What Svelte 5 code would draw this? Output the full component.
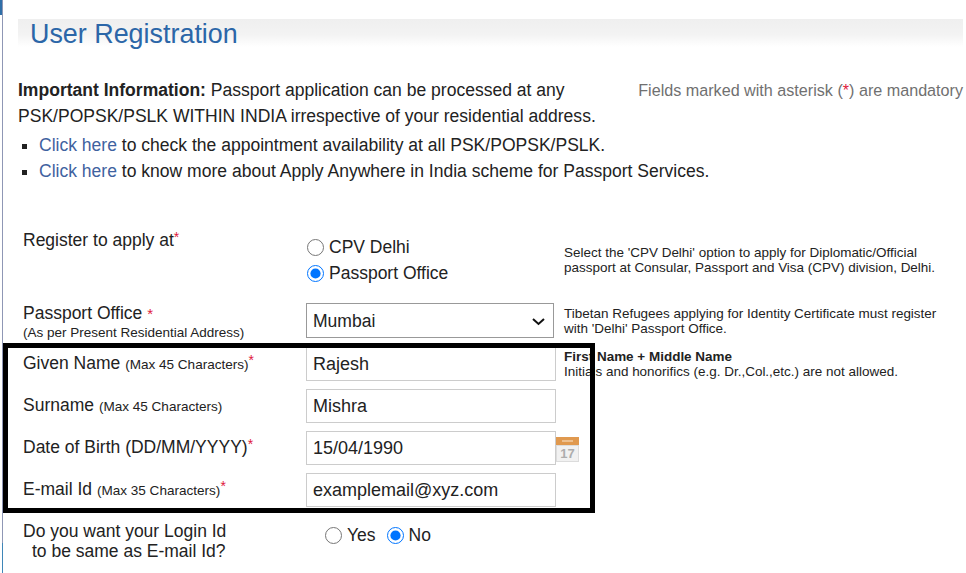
<script>
  const fields = [
    { label: 'Given Name', hint: '(Max 45 Characters)', req: true, value: 'Rajesh' },
    { label: 'Surname', hint: '(Max 45 Characters)', req: false, value: 'Mishra' },
    { label: 'Date of Birth (DD/MM/YYYY)', hint: '', req: true, value: '15/04/1990', cal: true },
    { label: 'E-mail Id', hint: '(Max 35 Characters)', req: true, value: 'examplemail@xyz.com' }
  ];
</script>

<div class="page">
  <div class="edge top"></div>
  <div class="edge line"></div>
  <div class="edge bottom"></div>

  <div class="title"><h1>User Registration</h1></div>

  <div class="info">
    <p><b>Important Information:</b> Passport application can be processed at any PSK/POPSK/PSLK WITHIN INDIA irrespective of your residential address.</p>
    <span class="mand">Fields marked with asterisk (<span class="red">*</span>) are mandatory</span>
  </div>
  <ul>
    <li><a href="#a">Click here</a> to check the appointment availability at all PSK/POPSK/PSLK.</li>
    <li><a href="#a">Click here</a> to know more about Apply Anywhere in India scheme for Passport Services.</li>
  </ul>

  <div class="form">
    <div class="row reg">
      <div class="lab">Register to apply at<sup class="red">*</sup></div>
      <div class="radios">
        <label class="r"><input type="radio" name="at" />CPV Delhi</label>
        <label class="r"><input type="radio" name="at" checked />Passport Office</label>
      </div>
      <div class="note">Select the 'CPV Delhi' option to apply for Diplomatic/Official<br />passport at Consular, Passport and Visa (CPV) division, Delhi.</div>
    </div>

    <div class="row po">
      <div class="lab">Passport Office <span class="red star">*</span><br /><span class="as">(As per Present Residential Address)</span></div>
      <div class="selwrap">
        <select class="sel"><option>Mumbai</option></select>
        <svg class="chev" width="15" height="9" viewBox="0 0 15 9"><path d="M2 2 L7.5 7 L13 2" fill="none" stroke="#111" stroke-width="2" /></svg>
      </div>
      <div class="note">Tibetan Refugees applying for Identity Certificate must register<br />with 'Delhi' Passport Office.</div>
    </div>

    {#each fields as f, i}
      <div class="row fld">
        <div class="lab">{f.label}{#if f.hint}&nbsp;<span class="hint">{f.hint}</span>{/if}{#if f.req}<sup class="red">*</sup>{/if}</div>
        <div class="ctl">
          <input class="inp" type="text" value={f.value} />
          {#if f.cal}
            <svg class="cal" width="23" height="25" viewBox="0 0 23 25">
              <rect x="0" y="0" width="23" height="25" fill="#f1f1f1" />
              <rect x="0" y="0" width="23" height="8" fill="#e0994f" />
              <rect x="6" y="3" width="11" height="2" fill="#eec08e" />
              <rect x="0.5" y="8.5" width="22" height="16" fill="none" stroke="#dcdcdc" />
              <text x="11.5" y="21" text-anchor="middle" class="calt">17</text>
            </svg>
          {/if}
        </div>
        {#if i === 0}
          <div class="note first"><b>First Name + Middle Name</b><br />Initials and honorifics (e.g. Dr.,Col.,etc.) are not allowed.</div>
        {/if}
      </div>
    {/each}

    <div class="row login">
      <div class="lab two">Do you want your Login Id<br /><span class="ind">to be same as E-mail Id?</span></div>
      <div class="yn">
        <label class="r"><input type="radio" name="same" />Yes</label>
        <label class="r"><input type="radio" name="same" checked />No</label>
      </div>
    </div>
  </div>

  <div class="box"></div>
</div>

<style>
  :global(body) { margin: 0; background: #fff; overflow: hidden; }
  .page { position: relative; width: 966px; height: 573px; overflow: hidden; box-sizing: border-box; padding: 19px 3px 0 18px; font-family: "Liberation Sans", Arial, sans-serif; color: #222; font-size: 17.55px; }
  .edge { position: absolute; }
  .edge.top { left: 0; top: 0; width: 2px; height: 15px; background: #2f6fa8; }
  .edge.line { left: 2px; top: 0; width: 1px; height: 543px; background: #8f97b5; }
  .edge.bottom { left: 0; top: 543px; width: 3px; height: 30px; border-right: 1px solid #3f86b8; box-sizing: border-box; }

  .title { height: 28px; background: linear-gradient(#efefef, #f3f3f3 55%, #fff); padding-left: 12px; }
  h1 { margin: 0; font-weight: 400; font-size: 26.9px; line-height: 30px; color: #2b66a8; }

  .info { display: flex; justify-content: space-between; margin-top: 30px; }
  .info p { margin: 0; width: 600px; line-height: 26px; }
  .mand { color: #707070; font-size: 16.15px; line-height: 26px; white-space: nowrap; }
  .red { color: #e0193c; }

  ul { margin: 3px 0 0; padding: 0 0 0 21px; list-style: square; line-height: 26px; }
  a { color: #3f62a0; text-decoration: none; }

  .form { position: absolute; left: 23px; top: 230px; right: 0; }
  .row { display: grid; grid-template-columns: 283px 258px 1fr; }
  .reg { height: 73px; }
  .po { height: 44px; }
  .fld { height: 42px; }

  .lab { font-size: 17.5px; line-height: 20px; white-space: nowrap; }
  .fld .lab { padding-top: 6px; }
  .hint { font-size: 13.55px; }
  .as { font-size: 13.5px; display: block; line-height: 17px; }
  .star { font-size: 15px; }
  sup { font-size: 14px; line-height: 0; vertical-align: 4px; }

  .radios { display: flex; flex-direction: column; padding-top: 4px; }
  .r { display: flex; align-items: center; gap: 5px; height: 26px; font-size: 17.5px; }
  input[type="radio"] { width: 17px; height: 17px; margin: 0 0 0 1px; }

  .note { font-size: 13.47px; line-height: 15px; padding-top: 15px; white-space: nowrap; }
  .po .note { padding-top: 3px; }
  .note.first { padding-top: 0; position: relative; top: 2px; }

  .selwrap { position: relative; width: 248px; height: 35px; }
  .sel { appearance: none; box-sizing: border-box; width: 248px; height: 35px; border: 1px solid #999; background: #fff; font: inherit; color: inherit; padding: 0 6px; border-radius: 0; }
  .chev { position: absolute; left: 225px; top: 14px; pointer-events: none; }

  .ctl { display: flex; align-items: flex-start; }
  .inp { box-sizing: border-box; flex: none; width: 250px; height: 34px; border: 1px solid #ccc; padding: 0 6px; font: inherit; font-size: 18px; color: inherit; border-radius: 0; outline: none; background: #fff; }
  .cal { flex: none; margin-top: 6px; }
  .calt { font-family: "Liberation Sans", sans-serif; font-size: 13px; font-weight: 700; fill: #adadad; }

  .login { padding-top: 6px; }
  .two { line-height: 20px; }
  .ind { padding-left: 9px; }
  .yn { display: flex; gap: 10px; padding-left: 18px; margin-top: 1px; }

  .box { position: absolute; left: 3px; top: 343px; width: 592px; height: 170px; box-sizing: border-box; border: 5px solid #000; pointer-events: none; }
</style>
